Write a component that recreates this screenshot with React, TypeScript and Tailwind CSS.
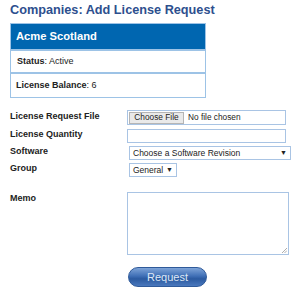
import React from 'react';

const labelCls = 'w-[117px] shrink-0 text-[9px] font-bold text-[#222] leading-[12px]';

const App: React.FC = () => {
  return (
    <div className="w-[307px] h-[296px] bg-white px-[10px] pt-[2px] font-['Liberation_Sans',Arial,sans-serif]">
      <h1 className="text-[12.7px] font-bold text-[#2d4f8e] leading-[16px]">Companies: Add License Request</h1>

      <div className="mt-[5px] w-[196px] border border-[#9dc3e6]">
        <div className="h-[25px] bg-[#0066b0] px-[5px] flex items-center text-[11.2px] font-bold text-white">
          Acme Scotland
        </div>
        <div className="h-[23px] border-t-2 border-[#9dc3e6] px-[6px] flex items-center text-[9px] text-[#222]">
          <span className="font-bold">Status</span>: Active
        </div>
        <div className="h-[25px] border-t-2 border-[#9dc3e6] px-[5px] flex items-center text-[9px] text-[#222]">
          <span className="font-bold">License Balance</span>: 6
        </div>
      </div>

      <div className="mt-[12px] flex flex-col">
        <div className="flex items-center h-[15px]">
          <div className={`${labelCls} -mt-[4px]`}>License Request File</div>
          <div className="w-[159px] h-[15px] border border-[#a9c4e4] flex items-center">
            <span className="ml-[1px] h-[12px] w-[55px] bg-[#e9e9e9] border border-[#b5b5b5] text-[8.3px] text-[#222] flex items-center justify-center leading-none whitespace-nowrap">
              Choose File
            </span>
            <span className="ml-[4px] text-[8.3px] text-[#222] whitespace-nowrap">No file chosen</span>
          </div>
        </div>

        <div className="flex items-center h-[14px] mt-[4px]">
          <div className={`${labelCls} -mt-[4px]`}>License Quantity</div>
          <div className="w-[159px] h-[14px] border border-[#a9c4e4]" />
        </div>

        <div className="flex items-center h-[14px] mt-[3px]">
          <div className={`${labelCls} -mt-[4px]`}>Software</div>
          <div className="ml-[2px] w-[162px] h-[14px] border border-[#a9c4e4] flex items-center justify-between px-[3px] text-[8.5px] text-[#222] whitespace-nowrap">
            <span>Choose a Software Revision</span>
            <span className="text-[7px]">▼</span>
          </div>
        </div>

        <div className="flex items-center h-[14px] mt-[3px]">
          <div className={`${labelCls} -mt-[4px]`}>Group</div>
          <div className="ml-[2px] w-[48px] h-[14px] border border-[#a9c4e4] flex items-center justify-between px-[3px] text-[8.5px] text-[#222] whitespace-nowrap">
            <span>General</span>
            <span className="text-[7px]">▼</span>
          </div>
        </div>

        <div className="flex items-start mt-[15px]">
          <div className={labelCls}>Memo</div>
          <div className="relative w-[162px] h-[63px] border border-[#a9c4e4]">
            <svg className="absolute right-[1px] bottom-[1px]" width="6" height="6" viewBox="0 0 6 6">
              <path d="M1 6 L6 1 M3.5 6 L6 3.5" stroke="#999" strokeWidth="0.8" />
            </svg>
          </div>
        </div>

        <div className="flex mt-[12px]">
          <div className="w-[118px] shrink-0" />
          <button className="w-[79px] h-[20px] rounded-full border border-[#2f5a9a] bg-[linear-gradient(to_bottom,#7ea4d8_0%,#3f6fb6_45%,#2b5aa0_60%,#4a78bd_100%)] text-[11px] text-[#dfe8f5] leading-none flex items-center justify-center">
            Request
          </button>
        </div>
      </div>
    </div>
  );
};

export default App;
